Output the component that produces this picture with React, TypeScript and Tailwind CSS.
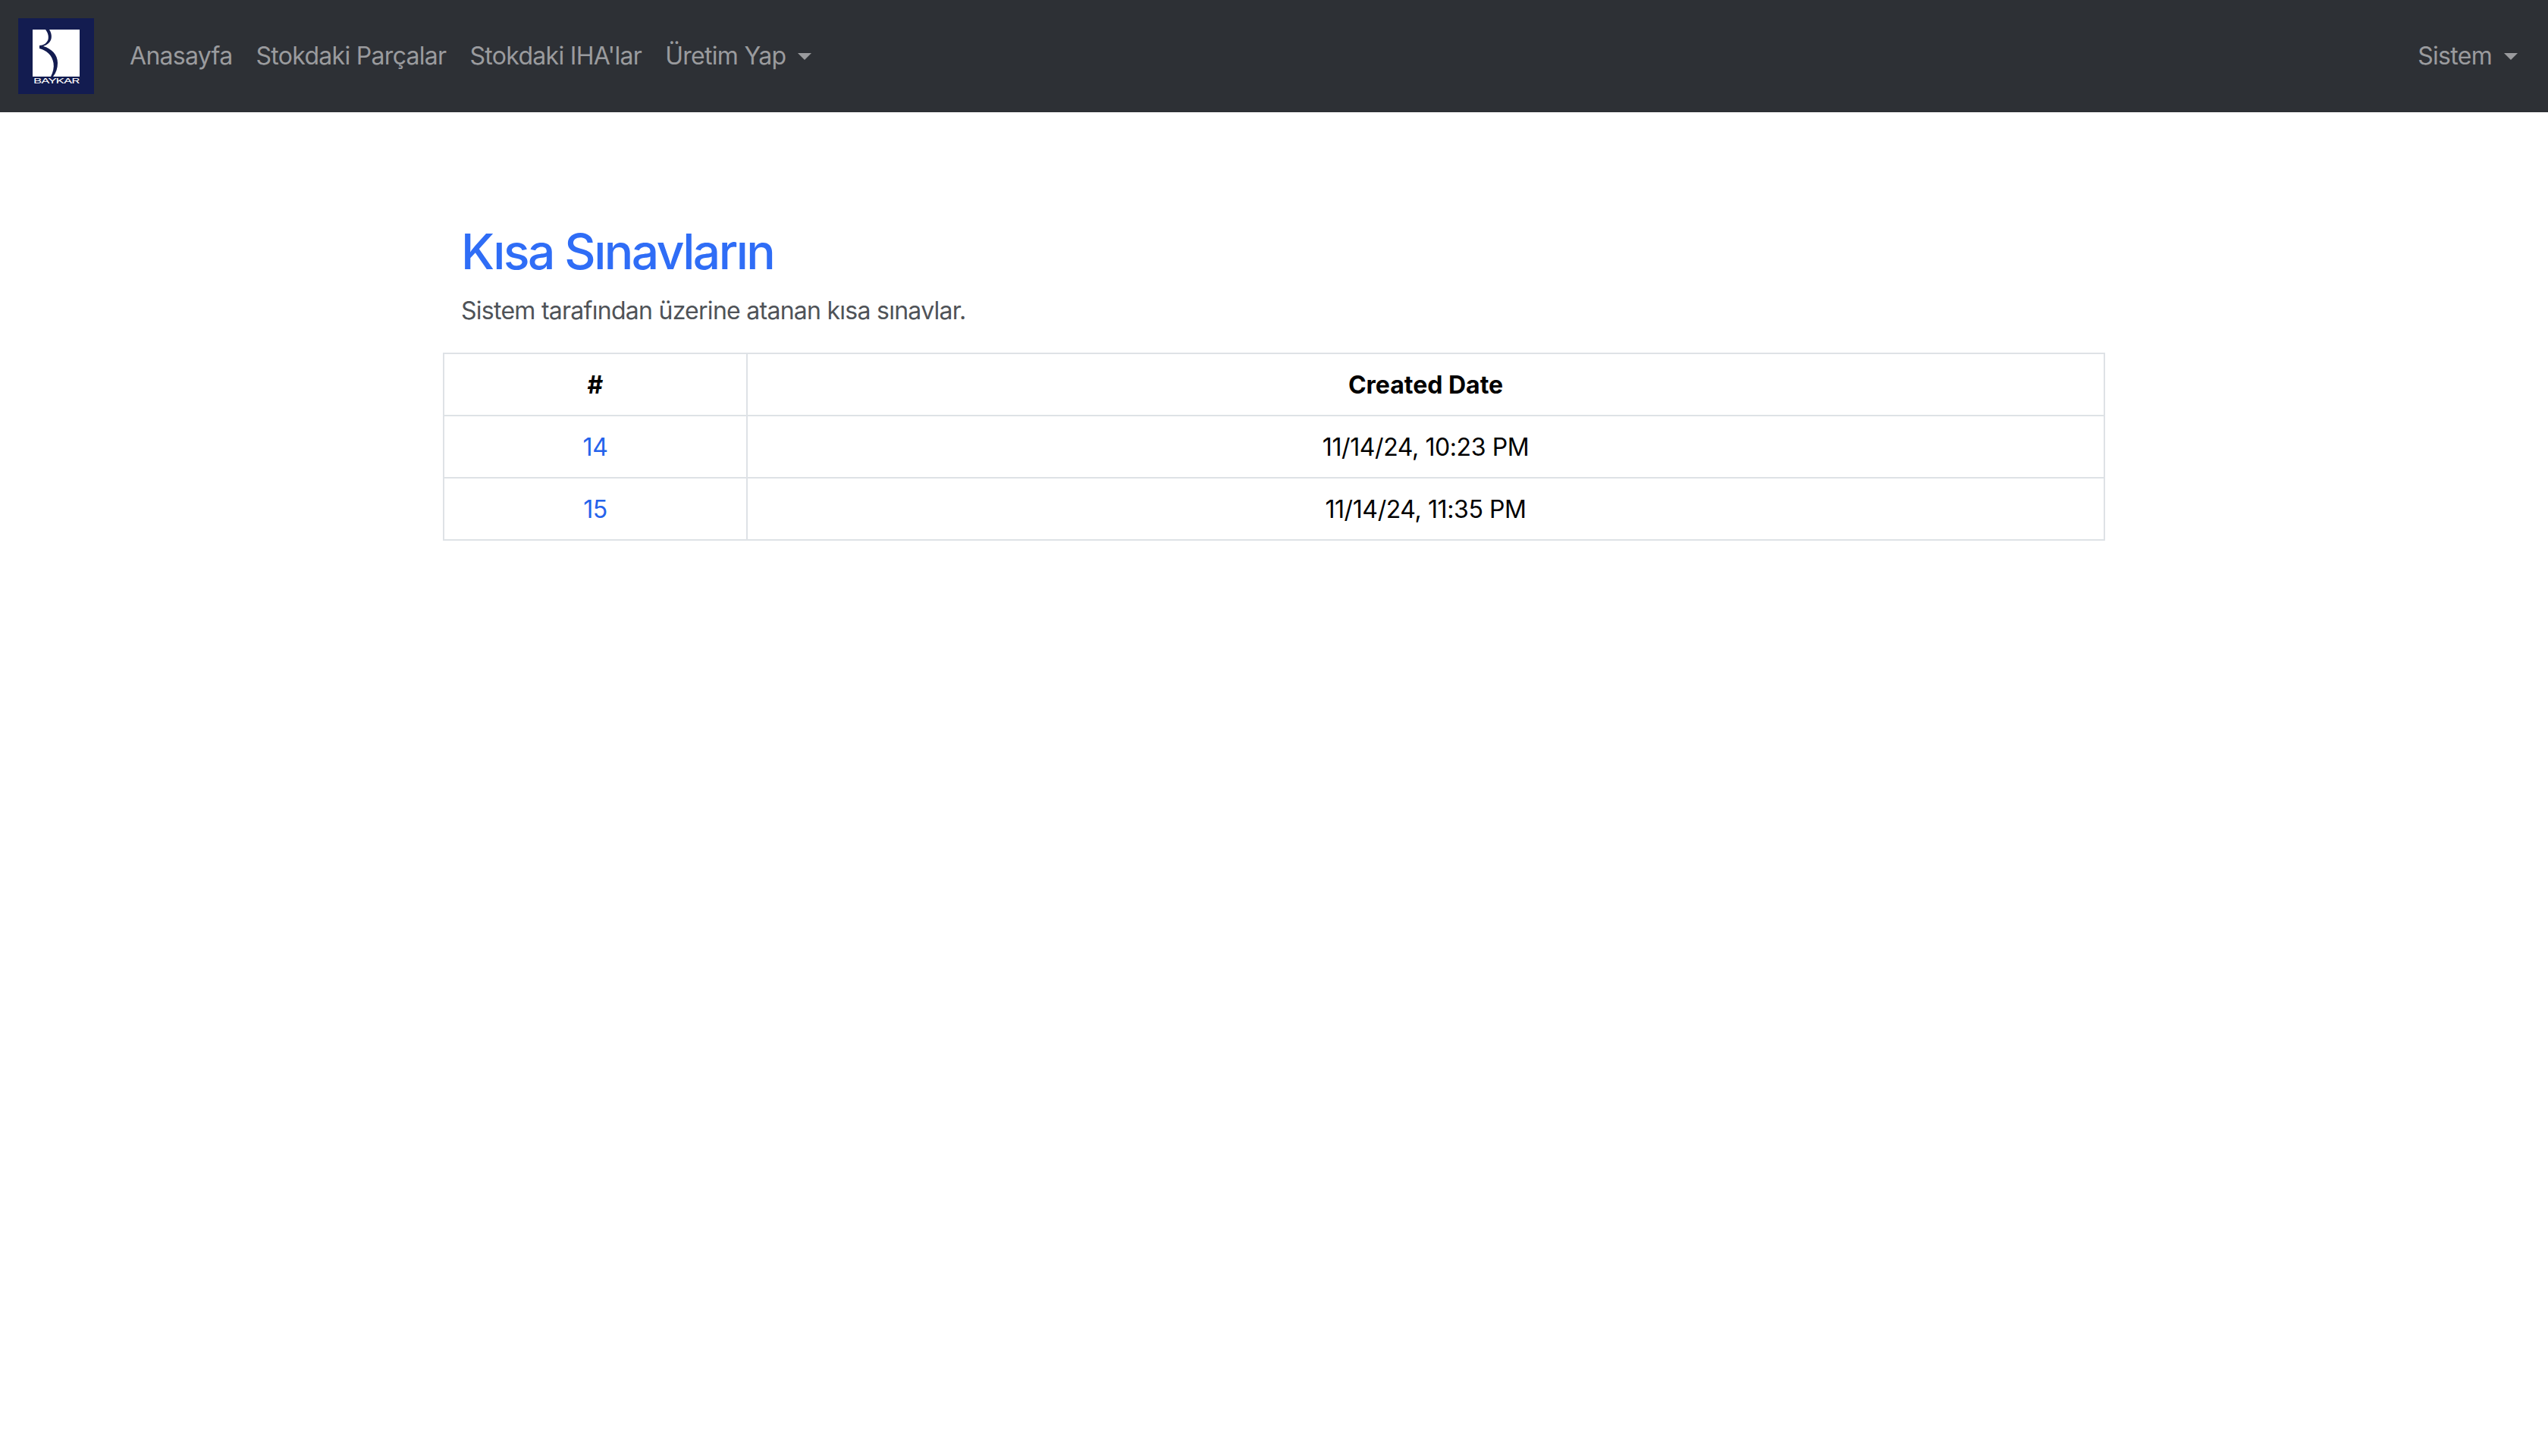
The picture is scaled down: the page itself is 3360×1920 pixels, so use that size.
const navItems = ["Anasayfa", "Stokdaki Parçalar", "Stokdaki IHA'lar"];

const quizzes = [
  { id: 14, date: "11/14/24, 10:23 PM" },
  { id: 15, date: "11/14/24, 11:35 PM" },
];

function Caret() {
  return <span className="ml-[16px] inline-block border-x-[9px] border-t-[9px] border-x-transparent border-t-[#9a9b9e] align-[6px]" />;
}

function Logo() {
  return (
    <svg width="100" height="100" viewBox="0 0 100 100" className="block shrink-0">
      <rect width="100" height="100" fill="#131c50" />
      <rect x="19" y="15" width="62" height="62" fill="#fff" />
      <path
        d="M36 15 L41 15 C45 21 45 29 40 33 C38 35 35 36 33 37 C44 40 52 48 52 59 C52 66 50 72 46 77 L43 77 C46 71 47.5 65 46.5 59 C45 49 37 42 28 40 L28 36 C33 36 38 33 39.5 28 C40.5 23 39 19 36 15 Z"
        fill="#131c50"
      />
      <text x="20" y="86" fill="#fff" fontSize="9.5" textLength="60" lengthAdjust="spacingAndGlyphs" fontFamily="Inter, sans-serif">
        BAYKAR
      </text>
    </svg>
  );
}

export default function App() {
  return (
    <div className="min-h-[1920px] bg-white font-['Inter',sans-serif] text-[32px] leading-[48px]">
      <nav className="flex h-[148px] items-center justify-between bg-[#2d3035] pl-[24px] pr-[40px] tracking-[-0.7px] text-[#9a9b9e]">
        <div className="flex items-center">
          <Logo />
          <ul className="ml-[47px] flex gap-[31px]">
            {navItems.map((item) => (
              <li key={item}>{item}</li>
            ))}
            <li>
              Üretim Yap
              <Caret />
            </li>
          </ul>
        </div>
        <div>
          Sistem
          <Caret />
        </div>
      </nav>

      <main className="mx-auto w-[2192px] pt-[144px]">
        <div className="px-[24px]">
          <h2 className="text-[64px] font-medium leading-[80px] tracking-[-2.5px] text-[#2f6df6]">Kısa Sınavların</h2>
          <p className="mt-[14px] tracking-[-0.73px] text-[#4f5358]">Sistem tarafından üzerine atanan kısa sınavlar.</p>
        </div>
        <table className="mt-[31px] w-full border-collapse border-2 border-[#dee2e6] text-center text-black">
          <thead>
            <tr>
              <th className="w-[400px] border-2 border-[#dee2e6] pt-[17px] pb-[15px] font-bold">#</th>
              <th className="border-2 border-[#dee2e6] pt-[17px] pb-[15px] font-bold">Created Date</th>
            </tr>
          </thead>
          <tbody className="tracking-[-0.4px]">
            {quizzes.map((quiz) => (
              <tr key={quiz.id}>
                <td className="border-2 border-[#dee2e6] pt-[17px] pb-[15px]">
                  <a href="#" className="text-[#2563eb]">
                    {quiz.id}
                  </a>
                </td>
                <td className="border-2 border-[#dee2e6] pt-[17px] pb-[15px]">{quiz.date}</td>
              </tr>
            ))}
          </tbody>
        </table>
      </main>
    </div>
  );
}
